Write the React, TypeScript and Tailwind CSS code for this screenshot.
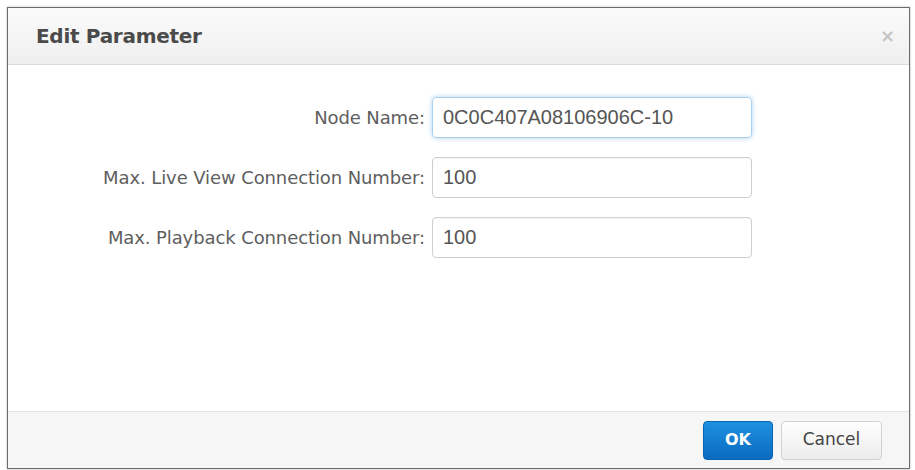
const rows = [
  { label: 'Node Name:', value: '0C0C407A08106906C-10', focused: true },
  { label: 'Max. Live View Connection Number:', value: '100', focused: false },
  { label: 'Max. Playback Connection Number:', value: '100', focused: false },
]

export default function App() {
  return (
    <div className="w-[915px] h-[470px] bg-white p-[7px] pb-0" style={{ fontFamily: '"DejaVu Sans", Tahoma, sans-serif' }}>
      <div className="flex flex-col w-[903px] h-[462px] border border-[#6b6b6b] bg-white shadow-[0_0_2px_rgba(0,0,0,0.3)]">
        {/* header */}
        <div className="flex items-center justify-between h-[57px] px-[28px] bg-gradient-to-b from-[#fbfbfb] to-[#efefef] border-b border-[#dcdcdc]">
          <h1 className="text-[20px] font-bold text-[#4a4a4a] tracking-[-0.3px]">Edit Parameter</h1>
          <span className="text-[18px] font-bold text-[#c4c4c4] leading-none -mr-[14px]">×</span>
        </div>

        {/* body */}
        <div className="flex-1 flex flex-col gap-[19px] pt-[32px]">
          {rows.map((row) => (
            <div key={row.label} className="flex items-center">
              <label className="w-[417px] text-right text-[18px] text-[#5e5e5e] tracking-[-0.1px]">{row.label}</label>
              <input
                readOnly
                value={row.value}
                className={
                  row.focused
                    ? 'ml-[7px] w-[320px] h-[41px] px-[10px] rounded-[4px] border border-[#a9cfee] shadow-[0_0_5px_rgba(120,180,230,0.6)] text-[20px] text-[#555] outline-none'
                    : 'ml-[7px] w-[320px] h-[41px] px-[10px] rounded-[4px] border border-[#cfcfcf] shadow-[inset_0_1px_1px_rgba(0,0,0,0.05)] text-[20px] text-[#555] outline-none'
                }
                style={{ fontFamily: '"Liberation Sans", Arial, sans-serif' }}
              />
            </div>
          ))}
        </div>

        {/* footer */}
        <div className="flex items-center justify-end gap-[8px] h-[57px] pr-[27px] bg-[#f6f6f6] border-t border-[#e2e2e2]">
          <button className="w-[70px] h-[39px] rounded-[4px] border border-[#0b63b0] bg-gradient-to-b from-[#1e90e0] to-[#0a6bc0] text-white text-[16px] font-bold">
            OK
          </button>
          <button className="w-[101px] h-[39px] rounded-[4px] border border-[#d2d2d2] bg-gradient-to-b from-white to-[#ececec] text-[#444] text-[17px]">
            Cancel
          </button>
        </div>
      </div>
    </div>
  )
}
